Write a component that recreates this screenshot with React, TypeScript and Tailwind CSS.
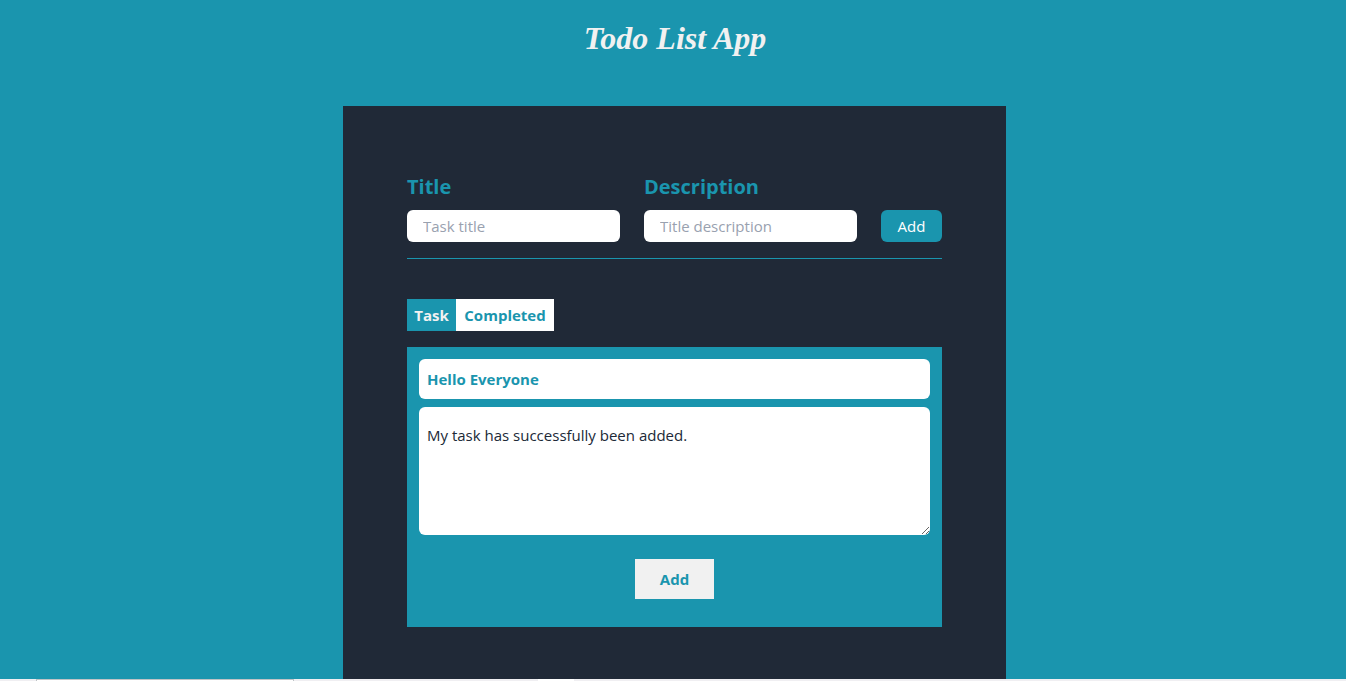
import { useState } from 'react';

const field =
  'h-8 w-full min-w-0 rounded-md bg-white px-4 text-[15px] text-gray-800 outline-none placeholder:text-gray-400';

const fieldLabel = 'mb-[7px] block text-xl leading-8 font-bold text-[#1a95ae]';

export default function App() {
  const [tab, setTab] = useState('task');
  const [title, setTitle] = useState('Hello Everyone');
  const [details, setDetails] = useState('My task has successfully been added.');

  const tabColor = (active: boolean) => (active ? 'bg-[#1a95ae] text-[#f1f1f1]' : 'bg-white text-[#1a95ae]');

  return (
    <div className="flex min-h-screen flex-col bg-[#1a95ae] font-['Open_Sans',sans-serif]">
      <header className="pt-3.5 pb-11 pl-1 text-center">
        <h1 className="font-['Liberation_Serif',serif] text-[32px] leading-[48px] font-bold text-[#f1f1f1] italic">
          Todo List App
        </h1>
      </header>
      <main className="flex flex-1 flex-col pl-[3px]">
        <section className="mx-auto w-full max-w-[663px] flex-1 bg-[#202937] px-16 pt-[65px] pb-[52px]">
          <form
            className="flex items-end gap-6 border-b border-[#1a95ae] pb-4"
            onSubmit={(e) => e.preventDefault()}
          >
            <div className="min-w-0 flex-1">
              <label htmlFor="title" className={fieldLabel}>
                Title
              </label>
              <input id="title" placeholder="Task title" className={field} />
            </div>
            <div className="min-w-0 flex-1">
              <label htmlFor="description" className={fieldLabel}>
                Description
              </label>
              <input id="description" placeholder="Title description" className={field} />
            </div>
            <button type="submit" className="h-8 w-[61px] rounded-md bg-[#1a95ae] text-[15px] text-white">
              Add
            </button>
          </form>

          <div className="mt-10 flex text-[15px] font-bold">
            <button type="button" className={`h-8 w-[49px] ${tabColor(tab === 'task')}`} onClick={() => setTab('task')}>
              Task
            </button>
            <button
              type="button"
              className={`h-8 w-[98px] ${tabColor(tab === 'completed')}`}
              onClick={() => setTab('completed')}
            >
              Completed
            </button>
          </div>

          <form
            className="mt-4 flex flex-col bg-[#1a95ae] px-3 pt-3 pb-7"
            onSubmit={(e) => e.preventDefault()}
          >
            <input
              aria-label="Task title"
              value={title}
              onChange={(e) => setTitle(e.target.value)}
              className="h-10 rounded-md bg-white px-2 text-[15px] font-bold text-[#1a95ae] outline-none"
            />
            <textarea
              aria-label="Task description"
              value={details}
              onChange={(e) => setDetails(e.target.value)}
              className="mt-2 h-32 rounded-md bg-white px-2 py-4 text-[15px] leading-6 text-[#202937] outline-none"
            />
            <button
              type="submit"
              className="mt-6 h-10 w-[79px] self-center bg-[#f1f1f1] text-[15px] font-bold text-[#1a95ae]"
            >
              Add
            </button>
          </form>
        </section>
      </main>
      <footer className="flex h-0.5 bg-[#f0eff2] pl-9">
        <div className="w-[258px] border-x border-t border-[#bfc4c6] bg-white" />
        <div className="ml-[244px] w-9 bg-white" />
      </footer>
    </div>
  );
}
